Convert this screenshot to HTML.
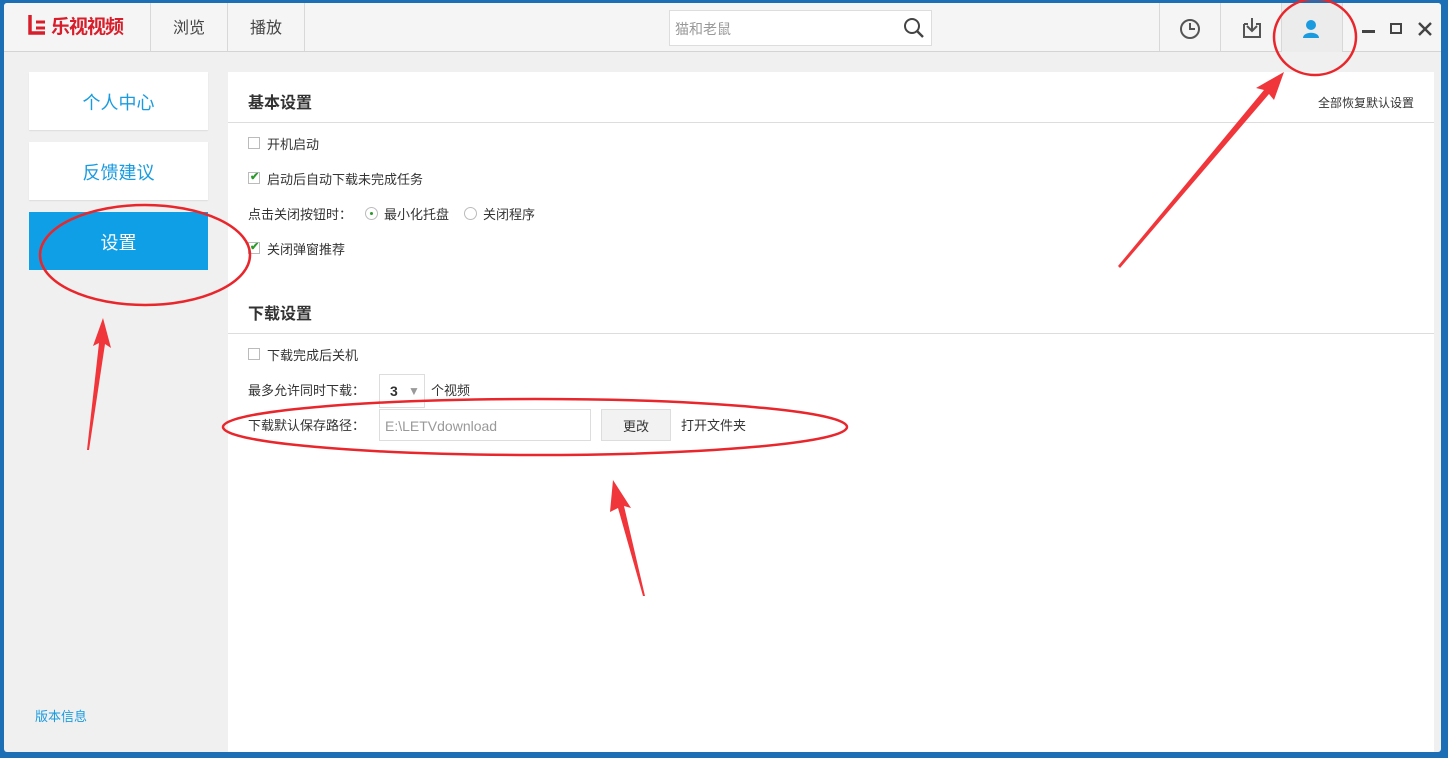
<!DOCTYPE html>
<html><head><meta charset="utf-8"><style>
*{margin:0;padding:0;box-sizing:border-box}
body{width:1448px;height:758px;overflow:hidden;background:#1d6fb5;font-family:"Liberation Sans","Noto Sans CJK SC",sans-serif;position:relative}
.win{position:absolute;left:4px;top:3px;width:1437px;height:749px;background:#f0f0f0;border-radius:3px;overflow:hidden}
.hdr{position:absolute;left:0;top:0;width:100%;height:49px;background:#f5f5f5;border-bottom:1px solid #d4d4d4}
.abs{position:absolute;line-height:1}
.vd{position:absolute;top:0;width:1px;height:48px;background:#d8d8d8}
.menu{position:absolute;left:25px;width:179px;height:58px;background:#fff;color:#1a9be0;font-size:18px;text-align:center;line-height:62px;box-shadow:0 1px 1px #ddd}
.panel{position:absolute;left:224px;top:69px;width:1206px;height:690px;background:#fff}
.t{position:absolute;font-size:13px;color:#333;white-space:nowrap;line-height:1}
.h{position:absolute;font-size:16px;color:#333;font-weight:bold;line-height:1}
.line{position:absolute;left:0;width:1206px;height:1px;background:#ddd}
.cb{position:absolute;width:12px;height:12px;border:1px solid #bbb;background:#fff}
.ck{position:absolute;left:1px;top:-1px;color:#2a9a2a;font-size:11px;font-weight:bold;line-height:1}
</style></head><body>
<div class="win">
 <div class="hdr">
  <svg class="abs" style="left:23px;top:11px" width="20" height="22"><path d="M3 1v18h15" stroke="#d81e2a" stroke-width="3.5" fill="none"/><path d="M9 8h9M9 14h9" stroke="#d81e2a" stroke-width="3"/></svg>
  <div class="abs" style="left:47px;top:15px;font-size:19px;font-weight:bold;color:#d81e2a;letter-spacing:-1px">乐视视频</div>
  <div class="vd" style="left:146px"></div><div class="vd" style="left:223px"></div><div class="vd" style="left:300px"></div>
  <div class="abs" style="left:169px;top:18px;font-size:16px;color:#444">浏览</div>
  <div class="abs" style="left:246px;top:18px;font-size:16px;color:#444">播放</div>
  <div class="abs" style="left:665px;top:7px;width:263px;height:36px;background:#fff;border:1px solid #ddd"></div>
  <div class="abs" style="left:671px;top:19px;font-size:14px;color:#999">猫和老鼠</div>
  <svg class="abs" style="left:899px;top:14px" width="22" height="22"><circle cx="9" cy="9" r="7" stroke="#444" stroke-width="2" fill="none"/><path d="M14 14l6 6" stroke="#444" stroke-width="2.4"/></svg>
  <div class="vd" style="left:1155px"></div><div class="vd" style="left:1216px"></div><div class="vd" style="left:1277px"></div><div class="vd" style="left:1338px"></div>
  <div class="abs" style="left:1278px;top:0;width:60px;height:49px;background:#ececec"></div>
  <svg class="abs" style="left:1174px;top:14px" width="24" height="24"><circle cx="12" cy="12" r="9" stroke="#555" stroke-width="2" fill="none"/><path d="M12 6v6h5" stroke="#555" stroke-width="2" fill="none"/></svg>
  <svg class="abs" style="left:1236px;top:13px" width="24" height="24"><path d="M4 8v13h16V8h-4M8 8H4" stroke="#555" stroke-width="2" fill="none"/><path d="M12 2v13M7 10l5 5 5-5" stroke="#555" stroke-width="2" fill="none"/></svg>
  <svg class="abs" style="left:1297px;top:15px" width="20" height="22"><circle cx="10" cy="7" r="5" fill="#1a9be0"/><path d="M2 20c0-7 16-7 16 0z" fill="#1a9be0"/></svg>
  <div class="abs" style="left:1358px;top:27px;width:13px;height:3px;background:#444"></div>
  <div class="abs" style="left:1386px;top:20px;width:12px;height:11px;border:2px solid #444"></div>
  <svg class="abs" style="left:1414px;top:19px" width="14" height="14"><path d="M1 1l12 12M13 1L1 13" stroke="#444" stroke-width="2.4"/></svg>
 </div>
 <div class="menu" style="top:69px">个人中心</div>
 <div class="menu" style="top:139px">反馈建议</div>
 <div class="menu" style="top:209px;background:#0f9fe6;color:#fff;box-shadow:none">设置</div>
 <div class="abs" style="left:31px;top:707px;font-size:13px;color:#1a9be0">版本信息</div>
 <div class="panel">
  <div class="h" style="left:20px;top:24px">基本设置</div>
  <div class="t" style="left:1090px;top:25px;font-size:12px">全部恢复默认设置</div>
  <div class="line" style="top:50px"></div>
  <div class="cb" style="left:20px;top:65px"></div><div class="t" style="left:39px;top:66px">开机启动</div>
  <div class="cb" style="left:20px;top:100px"><span class="ck">✔</span></div><div class="t" style="left:39px;top:101px">启动后自动下载未完成任务</div>
  <div class="t" style="left:20px;top:136px">点击关闭按钮时：</div>
  <div class="abs" style="left:137px;top:135px;width:13px;height:13px;border:1px solid #bbb;border-radius:50%"><div class="abs" style="left:4px;top:4px;width:3px;height:3px;background:#2a9a2a;border-radius:50%"></div></div>
  <div class="t" style="left:156px;top:136px">最小化托盘</div>
  <div class="abs" style="left:236px;top:135px;width:13px;height:13px;border:1px solid #bbb;border-radius:50%"></div>
  <div class="t" style="left:255px;top:136px">关闭程序</div>
  <div class="cb" style="left:20px;top:170px"><span class="ck">✔</span></div><div class="t" style="left:39px;top:171px">关闭弹窗推荐</div>
  <div class="h" style="left:20px;top:235px">下载设置</div>
  <div class="line" style="top:261px"></div>
  <div class="cb" style="left:20px;top:276px"></div><div class="t" style="left:39px;top:277px">下载完成后关机</div>
  <div class="t" style="left:20px;top:312px">最多允许同时下载：</div>
  <div class="abs" style="left:151px;top:302px;width:46px;height:34px;border:1px solid #ddd"></div>
  <div class="t" style="left:162px;top:312px;font-weight:bold;font-size:14px">3</div>
  <div class="t" style="left:180px;top:313px;color:#999;font-size:12px">▼</div>
  <div class="t" style="left:203px;top:312px">个视频</div>
  <div class="t" style="left:20px;top:347px">下载默认保存路径：</div>
  <div class="abs" style="left:151px;top:337px;width:212px;height:32px;border:1px solid #ddd"></div>
  <div class="t" style="left:157px;top:347px;color:#999;font-size:14px">E:\LETVdownload</div>
  <div class="abs" style="left:373px;top:337px;width:70px;height:32px;border:1px solid #ddd;background:#f2f2f2;font-size:13px;color:#333;text-align:center;line-height:34px">更改</div>
  <div class="t" style="left:453px;top:347px">打开文件夹</div>
 </div>
</div>
<svg class="abs" style="left:0;top:0" width="1448" height="758">
 <g fill="none" stroke="#e8262b" stroke-width="2.5">
  <ellipse cx="145" cy="255" rx="105" ry="50"/>
  <ellipse cx="535" cy="427" rx="312" ry="28"/>
  <ellipse cx="1315" cy="37" rx="41" ry="38"/>
 </g>
 <g fill="#f0363a">
  <polygon points="103,318 111,348 105,344 89,450 87,450 99,343 93,346"/>
  <polygon points="613,480 631,508 624,506 645,596 643,596 618,508 610,512"/>
  <polygon points="1284,72 1274,100 1269,94 1120,268 1118,266 1264,90 1256,88"/>
 </g>
</svg>
</body></html>
